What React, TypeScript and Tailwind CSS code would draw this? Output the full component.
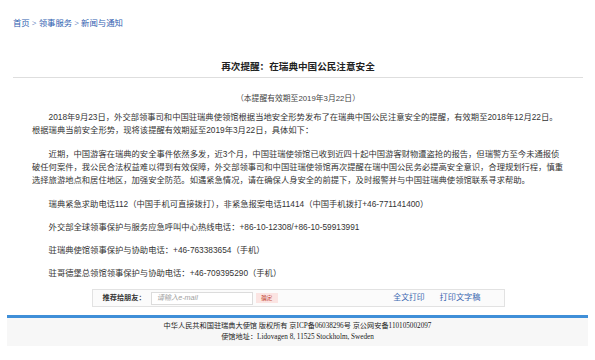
const sans = "font-['Liberation_Sans','Noto_Sans_CJK_SC',sans-serif]";
const serif = "font-['Liberation_Serif','Noto_Sans_CJK_SC',serif]";

const contacts = [
  "瑞典紧急求助电话112（中国手机可直接拨打），非紧急报案电话11414（中国手机拨打+46-771141400）",
  "外交部全球领事保护与服务应急呼叫中心热线电话：+86-10-12308/+86-10-59913991",
  "驻瑞典使馆领事保护与协助电话：+46-763383654（手机）",
  "驻哥德堡总领馆领事保护与协助电话：+46-709395290（手机）",
];

export default function App() {
  return (
    <div className="w-[595px] h-[360px] bg-white overflow-hidden">
      <div className={`${serif} pt-[18px] pl-[13px] text-[8.4px] leading-[12px] text-[#3060b0]`}>
        首页 &gt; 领事服务 &gt; 新闻与通知
      </div>

      <div className="mx-[13px] w-[570px]">
        <div className="mt-[30px] pb-[3px] border-b border-[#dedede]">
          <h1 className={`${serif} text-center text-[9.6px] leading-[14px] font-bold text-[#222]`}>
            再次提醒：在瑞典中国公民注意安全
          </h1>
        </div>

        <div className={`${sans} px-[19px] text-[#333]`}>
          <p className="mt-[15px] text-center text-[7.8px] leading-[12px] text-[#444]">
            （本提醒有效期至2019年3月22日）
          </p>
          <p className="mt-[5.5px] mb-[11px] text-[8.3px] leading-[13px] indent-[16.6px]">
            2018年9月23日，外交部领事司和中国驻瑞典使领馆根据当地安全形势发布了在瑞典中国公民注意安全的提醒，有效期至2018年12月22日。根据瑞典当前安全形势，现将该提醒有效期延至2019年3月22日，具体如下：
          </p>
          <p className="mb-[11px] text-[8.3px] leading-[13px] indent-[16.6px]">
            近期，中国游客在瑞典的安全事件依然多发，近3个月，中国驻瑞使领馆已收到近四十起中国游客财物遭盗抢的报告，但瑞警方至今未通报侦破任何案件，我公民合法权益难以得到有效保障，外交部领事司和中国驻瑞使领馆再次提醒在瑞中国公民务必提高安全意识，合理规划行程，慎重选择旅游地点和居住地区，加强安全防范。如遇紧急情况，请在确保人身安全的前提下，及时报警并与中国驻瑞典使领馆联系寻求帮助。
          </p>
          {contacts.map((c) => (
            <p key={c} className="mb-[10px] text-[8.3px] leading-[13px] indent-[16.6px]">
              {c}
            </p>
          ))}
        </div>

        <div className="mx-auto mt-[-0.5px] w-[413px] h-[18px] border border-[#e2e2e2] bg-[#fbfbfb] flex items-center pl-[10px] pr-[23px]">
          <span className={`${serif} text-[7.2px] font-bold text-[#333]`}>推荐给朋友：</span>
          <div className="ml-[5px] w-[102px] h-[13px] border border-[#dcdcdc] bg-white flex items-center pl-[5px]">
            <span className={`${sans} italic text-[7.2px] text-[#a0a0a0]`}>请输入e-mail</span>
          </div>
          <span className={`${sans} ml-[3px] w-[22px] h-[10px] bg-[#fbe4e2] text-[5.5px] leading-[10px] text-center text-[#c0392b]`}>
            确定
          </span>
          <span className={`${serif} ml-auto text-[7.8px] text-[#3a66b0]`}>全文打印</span>
          <span className={`${serif} ml-[15px] text-[8.2px] text-[#3a66b0]`}>打印文字稿</span>
        </div>
      </div>

      <div className="mx-[7px] mt-[8px] h-[3px] bg-[#3f8fd8]" />
      <div className={`${serif} mx-[7px] h-[28px] pt-[3px] bg-[#f7f7f7] text-center text-[7.2px] leading-[11px] text-[#222]`}>
        <div>中华人民共和国驻瑞典大使馆 版权所有 京ICP备06038296号 京公网安备110105002097</div>
        <div>使馆地址：Lidovagen 8, 11525 Stockholm, Sweden</div>
      </div>
    </div>
  );
}
